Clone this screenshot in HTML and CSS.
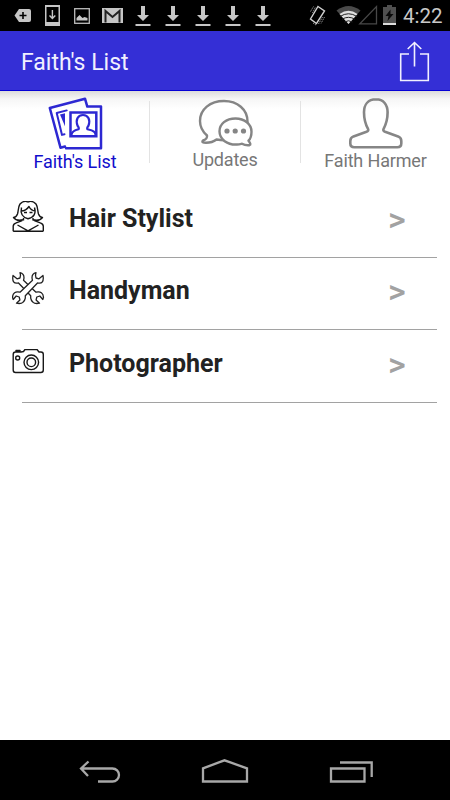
FILE: index.html
```html
<!DOCTYPE html>
<html lang="en">
<head>
<meta charset="utf-8">
<title>Faith's List</title>
<link rel="stylesheet" href="styles.css">
</head>
<body>
<svg class="defs" aria-hidden="true">
  <symbol id="download" viewBox="0 0 30 31"><path d="M14 6h4v9h4l-6 6-6-6h4zM8.500 24h15v2h-15z" fill="#c6c6c6"/></symbol>
</svg>
<div class="phone">
  <div class="status">
    <div class="notifications">
      <svg viewBox="0 0 30 31"><path d="M12 9h10a2 2 0 0 1 2 2v9a2 2 0 0 1-2 2H12l-4.500-6.500z" fill="#c6c6c6"/><path d="M16 12v7M12.500 15.500h7" stroke="#000" stroke-width="1.600"/></svg>
      <svg viewBox="0 0 30 31"><path d="M8 5h15v21H8zM9.500 7v15h12V7z" fill="#c6c6c6" fill-rule="evenodd"/><path d="M15.400 10v8M12.500 15.500l2.900 3 2.900-3" fill="none" stroke="#c6c6c6" stroke-width="1.400"/></svg>
      <svg viewBox="0 0 30 31"><rect x="7.700" y="8.700" width="14.600" height="14.600" fill="none" stroke="#bdbdbd" stroke-width="1.300"/><path d="M9.500 20.500v-2.500l3-3 3 3 2-1 3 1v2.500z" fill="#c6c6c6"/></svg>
      <svg viewBox="0 0 30 31"><path d="M5 8h21v15H5z" fill="#c6c6c6"/><path d="M8.500 22.500V11l7 6 7-6v11.500" fill="none" stroke="#222" stroke-width="2"/></svg>
      <svg><use href="#download"/></svg><svg><use href="#download"/></svg><svg><use href="#download"/></svg><svg><use href="#download"/></svg><svg><use href="#download"/></svg>
    </div>
    <div class="system">
      <svg width="96" height="31" viewBox="303 0 96 31">
        <path d="M318 6.500l6.500 4.500-8 12.500-6-4.500z" fill="none" stroke="#d0d0d0" stroke-width="1.400"/>
        <path d="M310.500 11.500l3-5M312.500 13l3-6M324.500 17l-3.500 6.500M322.500 17l-4 7M313 23l3 2" stroke="#8e8e8e" stroke-dasharray="1.500 .8" fill="none"/>
        <path d="M336.500 10.500Q348.500 1.500 360.500 10.500L348.500 24z" fill="#4a4a4a"/>
        <path d="M339.500 14Q348.500 7.500 357.500 14L348.500 24z" fill="#e0e0e0"/>
        <path d="M340 16.500q8.500-5.500 17 0M342 19.300q6.500-4 13 0M344.500 22q4-2.500 8 0" fill="none" stroke="#222" stroke-width="1"/>
        <path d="M359.800 23.800h16.700V6.500z" fill="none" stroke="#484848" stroke-width="1.300"/>
        <path d="M383 7h4V5h5v2h4v17.500h-13z" fill="#505050"/><path d="M383 23h13v2h-13z" fill="#ddd"/><path d="M390.500 9.500l-5 6.500h3l-1 5 6-7h-3z" fill="#0a0a0a"/>
      </svg>
      <span class="clock">4:22</span>
    </div>
  </div>
  <header class="bar">
    <h1>Faith's List</h1>
    <svg width="32" height="42" viewBox="0 0 32 42"><path d="M10 13H1.700v26.500h27.600V13H21M15.500 25.500V1.500M8.700 8l6.800-6.500L22.300 8" fill="none" stroke="#f1f0ff" stroke-width="1.600"/></svg>
  </header>
  <nav class="tabs">
    <div class="tab active">
      <svg width="56" height="54" viewBox="46.500 95.500 56 54"><g fill="none" stroke="#2d28d2" stroke-width="2.500" stroke-linejoin="round" stroke-linecap="round">
        <path d="M64.500 146l-4.500 1.200L49.300 107.500l35.200-9.300 2.300 7.900h13.700v41.600H65.500"/>
        <path d="M64 133.800l-2.500.6-5.300-21.900 10-2.600" stroke-width="2"/><path d="M59.500 114l5-1.300v13z" fill="#2d28d2" stroke="none"/>
        <path d="M70 112h25.800v23.800H70z" stroke-linejoin="miter"/><path d="M71 134q.5-3.500 7-5.200c1-1 0-2-1-3.700-2-5.500 0-10.600 5.500-10.600s7.500 5 5.500 10.600c-1 1.700-2 2.700-1 3.700 7 1.700 7.500 2.500 8 5.200" stroke-width="2.200"/></g></svg>
      <span>Faith's List</span>
    </div>
    <div class="tab updates">
      <svg width="56" height="52" viewBox="197 97 56 52"><g fill="#fff" stroke="#858585" stroke-width="2.400" stroke-linejoin="round"><path d="M224 101c-14 0-24 8.500-24 20 0 6.500 3 11 7 14.500.5 3-1 4-4 5-1.500 1.500 0 2.300 3 2.300 5 0 7.500-1 10.500-3.300 12 2 31 0 31-18 0-12-10-20.500-23.500-20.500z"/><path d="M235.500 118.500c-9.500 0-16 5.500-16 12.800 0 8.200 8 13.700 17.500 13.200 2.500-.2 4-.6 5-.8 2 1.200 4.500 1.800 7.500 1.500 1.500-.5 1-2-1-4.500 2-2 3-5.500 3-9 0-7.500-7-13.200-16-13.200z"/></g><g fill="#858585"><circle cx="227" cy="131" r="2.600"/><circle cx="235.200" cy="131" r="2.600"/><circle cx="243.500" cy="131" r="2.600"/></g></svg>
      <span>Updates</span>
    </div>
    <div class="tab person">
      <svg width="56" height="53" viewBox="347 97 56 53"><path d="M376 99.300c-8 0-12 5.500-12 13 0 7 1.500 12 4 16.500.8 1.500 0 2.400-1.500 3l-13 4.600c-2.500 1-3.200 2.500-3.200 4.500v2.600c0 2.500 1.500 3.700 4 3.700h43c2.500 0 4-1.200 4-3.700v-2.600c0-2-.7-3.500-3.200-4.500l-13-4.600c-1.500-.6-2.300-1.500-1.500-3 2.500-4.500 4-9.500 4-16.500 0-7.500-4-13-11.600-13z" fill="none" stroke="#868686" stroke-width="2.600"/></svg>
      <span>Faith Harmer</span>
    </div>
  </nav>
  <main>
    <div class="item"><svg width="32" height="32" viewBox="12 201 32 32"><g fill="none" stroke="#161616" stroke-width="1.400" stroke-linejoin="round"><path d="M13.200 231.300v-5q0-2.500 3-3.500l6-2.200M43.300 231.300v-5q0-2.500-3-3.500l-6-2.200M13.200 231.300h30.100M17.500 225l10.500 5.800 10.500-5.800M23.500 218v2.500M33 218v2.500M21.500 207.500q-2 9 6.500 11.300 9-2.300 6.500-11.300M21 211q5 0 8-4.500 2 4 6 4.500M24 212.500h3M29.500 212.500h3"/><path d="M28 202q-4-2-8 2c-2 3-1.500 7-2.500 10-1 2.500-2.500 3.500-4 3.500q3 4 9.500 2.300M28 202q4-2 8 2c2 3 1.500 7 2.500 10 1 2.500 2.500 3.500 4 3.500q-3 4-9.500 2.300"/></g></svg><span>Hair Stylist</span><b>&gt;</b></div>
    <div class="item"><svg width="34" height="34" viewBox="12 273 34 34"><g fill="#fff" stroke="#222" stroke-width="1.300" stroke-linejoin="round"><path d="M20 273.700q4 1 4 5-.1 1.500-.5 2.500l12.500 12q7-1.500 7.500 5l-.7 2.300-3-3.500-3 1-.7 3 3.400 3.200q-7.500 1.500-8.800-5v-2.500L18.500 284q-7 1.500-5.500-7.500l4 3.300 3-.8.500-2.800z"/><path d="M36 273.700q-4 1-4 5 .1 1.500.5 2.500L20 293.200q-7-1.500-7.500 5l.7 2.300 3-3.500 3 1 .7 3-3.400 3.200q7.500 1.500 8.800-5v-2.500L37.500 284q7 1.500 5.500-7.500l-4 3.300-3-.8-.5-2.800z"/></g></svg><span>Handyman</span><b>&gt;</b></div>
    <div class="item"><svg width="32" height="26" viewBox="12 349 32 26"><g fill="none" stroke="#181818" stroke-width="1.400" stroke-linejoin="round"><path d="M15.500 352H21l2.500-.5 1.500-2h12l2 2.500h2q2.300 0 2.300 2.500v15.500q0 2.500-2.500 2.500H15.500q-2.300 0-2.300-2.500v-15.500q0-2.500 2.300-2.500zM16 352v-1.500h4v1.500"/><circle cx="31.300" cy="362.300" r="7.300"/><circle cx="31.300" cy="362.300" r="4.300"/><circle cx="17.700" cy="358" r="2"/></g></svg><span>Photographer</span><b>&gt;</b></div>
  </main>
  <footer>
    <svg viewBox="0 4 450 60"><g fill="none" stroke="#a8a8a8" stroke-width="2.300"><path d="M98 45.500h14.500a6.500 6.500 0 0 0 0-13H81M88.500 25.500l-7.500 7 7 7.500"/><path d="M203 45.500V32.300l21.500-8L247 32.300v13.200z"/><path d="M331 32.500h33.500v13H331zM340 26.500h31.700V41"/></g></svg>
  </footer>
</div>
</body>
</html>
```
FILE: styles.css
```css
* { box-sizing: border-box; }
body { margin: 0; font-family: Roboto, "Liberation Sans", sans-serif; }
svg { display: block; flex: none; }
.defs { position: absolute; width: 0; height: 0; }
.phone { width: 450px; height: 800px; display: flex; flex-direction: column; background: #fff; overflow: hidden; }
.status { height: 31px; flex: none; background: #000; display: flex; justify-content: space-between; padding: 0 8px 0 7px; }
.notifications { display: grid; grid-template-columns: repeat(9, 30px); }
.notifications svg { width: 30px; height: 31px; }
.system { display: flex; }
.clock { color: #c9c9c9; font-size: 20.5px; line-height: 33px; width: 39px; margin-left: 4px; white-space: nowrap; }
.bar { height: 60px; flex: none; background: #342fd6; border-bottom: 1px solid #0500d5; display: flex; align-items: center; justify-content: space-between; padding: 3px 19px 0 21px; }
h1 { margin: 0; padding-top: 2px; color: #f1f0ff; font-size: 23px; font-weight: 400; line-height: 30px; }
.tabs { height: 90px; flex: none; display: grid; grid-template-columns: repeat(3, 1fr); background: linear-gradient(#dcdcdc, #f6f6f6 8px, #fff 18px); }
.tab { display: flex; flex-direction: column; align-items: center; padding-top: 5px; color: #777; font-size: 18px; line-height: 22px; letter-spacing: -0.1px; position: relative; }
.tab + .tab::before { content: ""; position: absolute; left: -1px; top: 10px; width: 1px; height: 62px; background: #e3e3e3; }
.tab + .tab + .tab::before { left: 0; }
.updates { padding-top: 6px; letter-spacing: -0.2px; }
.person { padding-top: 6px; letter-spacing: -0.15px; }
.person span { padding-left: 1px; }
.active { color: #120dcc; }
.active span { padding-top: 1px; }
main { flex: 1; padding-top: 4px; }
.item { height: 72.500px; display: grid; grid-template-columns: 57px 1fr 61px; align-items: center; padding: 0 0 6px 12px; background: linear-gradient(#a2a2a2, #a2a2a2) 22px 71.500px / 415px 1px no-repeat; }
.item svg { margin-bottom: 3px; }
.item span { font-size: 25px; font-weight: 700; color: #222; }
.item b { font-size: 34px; line-height: 40px; font-weight: 500; color: #a2a2a2; margin-left: -1px; padding-top: 1px; }
footer { height: 60px; flex: none; background: #000; }
footer svg { width: 450px; height: 60px; }
```
